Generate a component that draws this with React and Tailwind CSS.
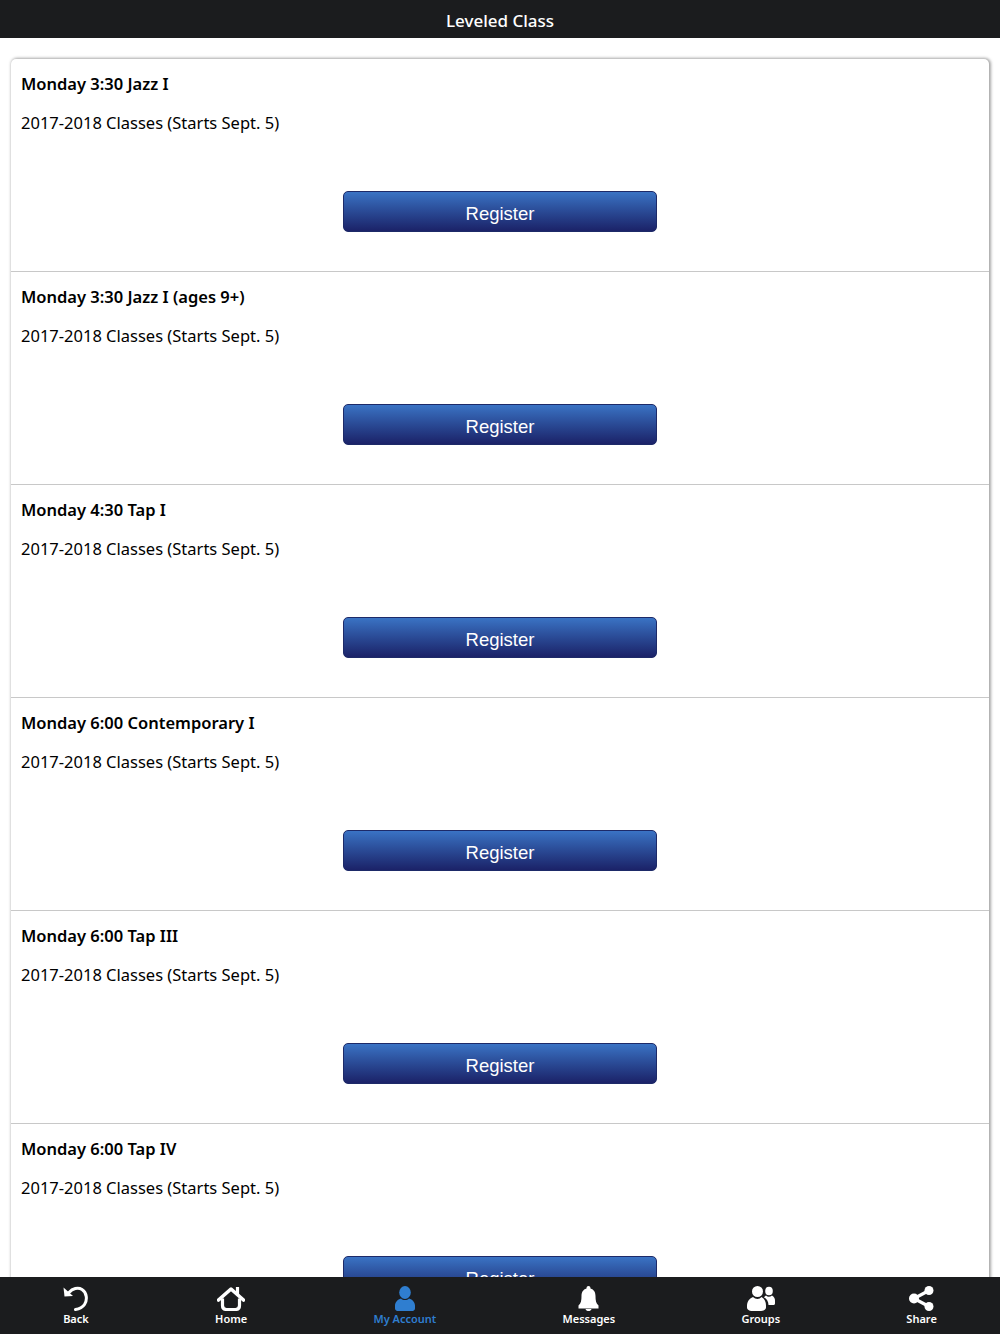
import React from "react";

const classes = [
  "Monday 3:30 Jazz I",
  "Monday 3:30 Jazz I (ages 9+)",
  "Monday 4:30 Tap I",
  "Monday 6:00 Contemporary I",
  "Monday 6:00 Tap III",
  "Monday 6:00 Tap IV",
];

const BackIcon = () => (
  <svg width="25" height="25" viewBox="0 0 25 25" fill="none" stroke="currentColor">
    <path d="M6 6.5 C9.5 2.5 15 1 19 3.5 C24 6.5 24.5 14 21.5 18.5 C19.5 21.5 16 23 12.5 23.5" strokeWidth="3" strokeLinecap="round" />
    <path d="M0.5 1.5 L1.5 10.5 L10 10 Z" fill="currentColor" stroke="none" />
  </svg>
);

const HomeIcon = () => (
  <svg width="28" height="25" viewBox="0 0 28 25" fill="none" stroke="currentColor">
    <path d="M1.5 14 L14 3 L26.5 14" strokeWidth="3.6" strokeLinecap="round" strokeLinejoin="round" />
    <path d="M5.5 12.5 V19.5 C5.5 22 7 23.5 9.5 23.5 H18.5 C21 23.5 22.5 22 22.5 19.5 V12.5" strokeWidth="3.2" />
    <path d="M20.5 1 V9" strokeWidth="3.2" />
  </svg>
);

const AccountIcon = () => (
  <svg width="20" height="25" viewBox="0 0 20 25" fill="currentColor">
    <ellipse cx="10" cy="6.5" rx="5.8" ry="6.5" />
    <path d="M6 12.5 C2.5 13.5 0 16.5 0 19.5 V22.5 C0 24.5 2 25 3 25 H17 C18 25 20 24.5 20 22.5 V19.5 C20 16.5 17.5 13.5 14 12.5 C12 14.5 8 14.5 6 12.5 Z" />
  </svg>
);

const BellIcon = () => (
  <svg width="21" height="25" viewBox="0 0 21 25" fill="currentColor">
    <path d="M10.5 0 C12 0 12.5 1 12.5 2.5 C16 3.5 17.5 6.5 17.5 10 C17.5 14.5 18 17.5 20.5 19.5 V22.5 H0.5 V19.5 C3 17.5 3.5 14.5 3.5 10 C3.5 6.5 5 3.5 8.5 2.5 C8.5 1 9 0 10.5 0 Z" />
    <path d="M7.5 23 H13.5 C13 24.5 12 25 10.5 25 C9 25 8 24.5 7.5 23 Z" />
  </svg>
);

const GroupsIcon = () => (
  <svg width="28" height="25" viewBox="0 0 28 25" fill="currentColor">
    <circle cx="10.5" cy="5.5" r="5.5" />
    <path d="M6 11 C2 12.5 0 16 0 19.5 V21.5 C0 23.5 2.5 25 5 25 H14 C16.5 25 19 23.5 19 21.5 V19.5 C19 16 17.5 12.5 14.5 11 C12.5 13.5 8.5 13.5 6 11 Z" />
    <ellipse cx="22" cy="5" rx="3.8" ry="4.3" />
    <path d="M19 9.5 C21 11.5 23 11 25 9.5 C27 10.5 28 12.5 28 14.5 V17.5 C28 18.5 27 19 26 19 H21.5 C21.5 15.5 19.5 12.5 17 11.5 C17.5 10.5 18.2 10 19 9.5 Z" />
  </svg>
);

const ShareIcon = () => (
  <svg width="25" height="25" viewBox="0 0 25 25" fill="currentColor" stroke="currentColor">
    <circle cx="20" cy="4.5" r="4.5" stroke="none" />
    <circle cx="5" cy="12.5" r="5" stroke="none" />
    <circle cx="20" cy="20.5" r="4.5" stroke="none" />
    <path d="M20 4.5 L5 12.5 L20 20.5" fill="none" strokeWidth="3.2" />
  </svg>
);

const navItems = [
  { label: "Back", icon: <BackIcon /> },
  { label: "Home", icon: <HomeIcon /> },
  { label: "My Account", icon: <AccountIcon />, active: true },
  { label: "Messages", icon: <BellIcon /> },
  { label: "Groups", icon: <GroupsIcon /> },
  { label: "Share", icon: <ShareIcon /> },
];

const App = () => {
  return (
    <div className="flex flex-col h-[1334px] overflow-hidden bg-white font-['Noto_Sans',sans-serif]">
      <header className="h-[38px] shrink-0 bg-[#1b1c1e] flex items-center justify-center pt-[4px] text-white text-[17px] font-medium">
        Leveled Class
      </header>

      <main className="flex-1 min-h-0 overflow-hidden pt-[21px] px-[11px]">
        <div className="bg-white rounded-[5px] shadow-[1px_0_3px_1px_rgba(0,0,0,0.35)]">
          {classes.map((name) => (
            <div key={name} className="h-[213px] px-[10px] pt-[12px] border-b border-[#c8c8c8] text-black">
              <h3 className="text-[16.5px] leading-[26px] font-semibold">{name}</h3>
              <p className="mt-[13px] text-[16.5px] leading-[26px]">2017-2018 Classes (Starts Sept. 5)</p>
              <div className="mt-[55px] flex justify-center">
                <button className="w-[314px] h-[41px] pt-[4px] rounded-[5px] border border-[#1d2a68] bg-gradient-to-b from-[#3a73c4] to-[#1b2268] text-white text-[18.5px] font-['Liberation_Sans',sans-serif]">
                  Register
                </button>
              </div>
            </div>
          ))}
        </div>
      </main>

      <nav className="h-[57px] shrink-0 bg-[#1b1c1e] flex justify-around items-start pt-[9px]">
        {navItems.map((item) => (
          <div
            key={item.label}
            className={`flex flex-col items-center ${item.active ? "text-[#2f7ed0]" : "text-white"}`}
          >
            {item.icon}
            <span className="text-[11px] leading-[16px] font-semibold">{item.label}</span>
          </div>
        ))}
      </nav>
    </div>
  );
};

export default App;
